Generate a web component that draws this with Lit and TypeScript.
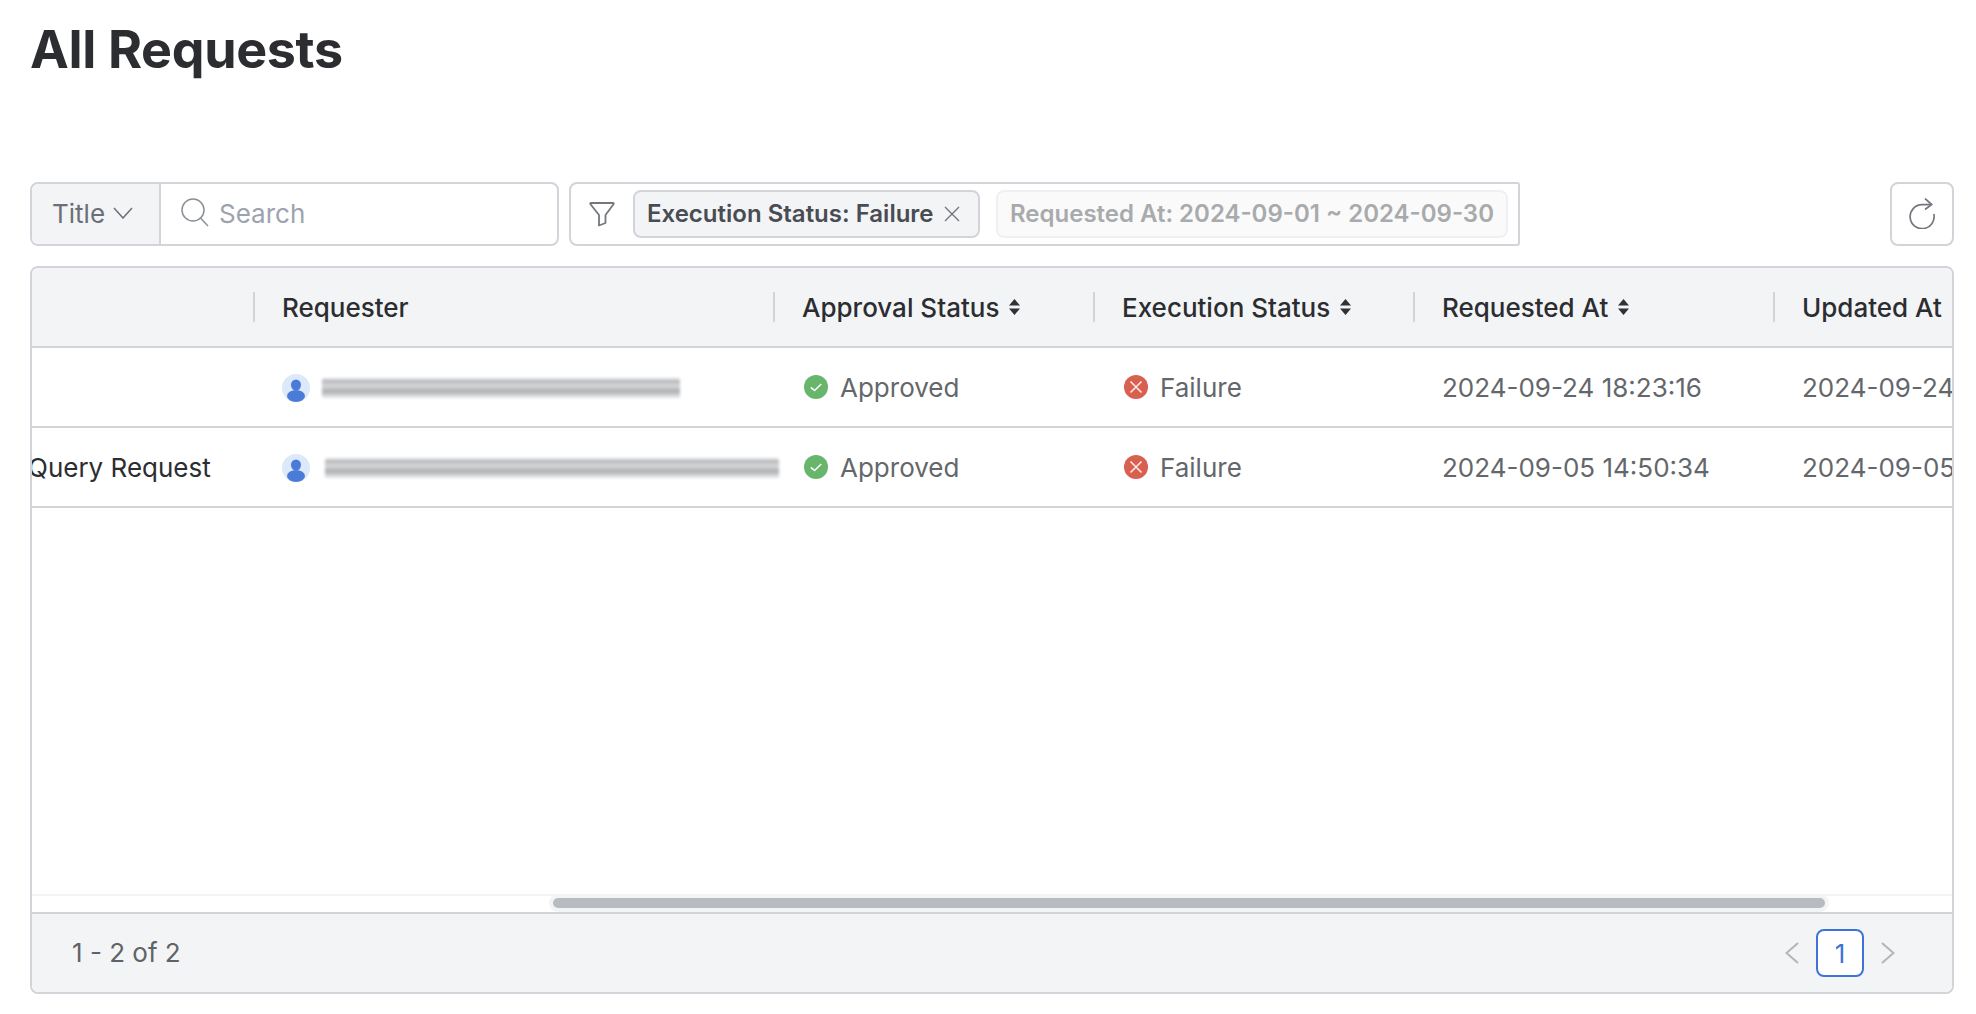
import { LitElement, html, css } from "lit";
import { customElement } from "lit/decorators.js";

const sortIcon = html`<svg class="sort" width="11" height="16" viewBox="0 0 11 16"><path d="M5.5 0 L11 6.5 H0Z M5.5 16 L11 9.5 H0Z" fill="#2f3237"/></svg>`;
const okIcon = html`<svg class="st" width="24" height="24" viewBox="0 0 24 24"><circle cx="12" cy="12" r="12" fill="#68b56c"/><path d="M6.8 12.4 L10.6 15.6 L17.2 9" fill="none" stroke="#fff" stroke-width="1.5"/></svg>`;
const failIcon = html`<svg class="st" width="24" height="24" viewBox="0 0 24 24"><circle cx="12" cy="12" r="12" fill="#d95f50"/><path d="M6.5 6.5 L17.5 17.5 M17.5 6.5 L6.5 17.5" fill="none" stroke="#fbe6e3" stroke-width="1.7"/></svg>`;
const avatar = html`<svg class="av" width="28" height="28" viewBox="0 0 28 28"><circle cx="14" cy="14" r="14" fill="#dce9fb"/><ellipse cx="14" cy="11" rx="5" ry="5.6" fill="#4b7bd8"/><ellipse cx="14" cy="22" rx="9" ry="6" fill="#4b7bd8"/></svg>`;

const rows = [
  { title: "", w: 358, ml: 0, req: "2024-09-24 18:23:16", upd: "2024-09-24 18:23:16" },
  { title: "Query Request", w: 454, ml: 3, req: "2024-09-05 14:50:34", upd: "2024-09-05 14:50:34" },
];

@customElement("app-root")
export class AppRoot extends LitElement {
  static styles = css`
    :host { display: block; font-family: Inter, "Liberation Sans", sans-serif; color: #2b2d31; background: #fff; height: 1014px; overflow: hidden; }
    .page { padding: 18px 22px 0 30px; display: flex; flex-direction: column; }
    h1 { margin: 0; font-size: 52px; line-height: 64px; font-weight: 700; letter-spacing: -0.35px; color: #2b2d31; }
    .toolbar { display: flex; margin-top: 100px; height: 64px; gap: 10px; }
    .search { display: flex; width: 529px; box-sizing: border-box; border: 2px solid #d2d4d9; border-radius: 8px; overflow: hidden; }
    .sel { width: 129px; box-sizing: border-box; background: #f3f4f6; border-right: 2px solid #d2d4d9; display: flex; align-items: center; padding: 0 0 2px 20px; gap: 8px; font-size: 26px; color: #6b7076; }
    .inp { flex: 1; display: flex; align-items: center; padding: 0 0 2px 19px; gap: 9px; font-size: 26px; color: #9ca3af; }
    .filters { width: 951px; box-sizing: border-box; border: 2px solid #d2d4d9; border-radius: 8px 3px 3px 8px; display: flex; align-items: center; padding: 0 0 1px 18px; gap: 18px; }
    .chip { height: 48px; box-sizing: border-box; border-radius: 8px; display: flex; align-items: center; font-size: 24px; font-weight: 600; white-space: nowrap; flex: none; }
    .chip.a { width: 347px; padding-left: 12px; gap: 10px; background: #f3f4f6; border: 2px solid #d2d4d9; color: #494c52; }
    .chip.b { width: 512px; margin-left: -2px; padding-left: 12px; background: #fafafa; border: 2px solid #f0f0f2; color: #a8aaad; }
    .refresh { margin-left: auto; width: 64px; box-sizing: border-box; border: 2px solid #d2d4d9; border-radius: 8px; display: flex; align-items: center; justify-content: center; padding-bottom: 2px; }
    .table { margin-top: 20px; height: 728px; box-sizing: border-box; border: 2px solid #d2d4d9; border-radius: 8px; display: flex; flex-direction: column; overflow: hidden; }
    .scroll { flex: 1; overflow: hidden; min-height: 0; position: relative; }
    .grid { margin-left: -100px; width: 2200px; }
    .row { display: grid; grid-template-columns: 321px 520px 320px 320px 360px 358px; height: 80px; box-sizing: border-box; border-bottom: 2px solid #d2d4d9; align-items: center; font-size: 26px; color: #63676c; }
    .row.head { background: #f3f4f6; font-weight: 500; color: #2b2d31; }
    .cell { display: flex; align-items: center; height: 30px; padding-left: 29px; box-sizing: border-box; white-space: nowrap; gap: 10px; }
    .cell.status { padding-left: 31px; gap: 8px; }
    .head .cell { border-left: 2px solid #d2d4d9; padding-left: 27px; }
    .head .cell:first-child { border-left: none; }
    .cell.title { padding-left: 96px; color: #2b2d31; }
    .st { margin-right: 4px; flex: none; }
    .av { flex: none; margin: 1px 2px 0 0; }
    .blur { height: 20px; margin-top: 2px; border-radius: 2px; background: linear-gradient(180deg, #e4e5e7 0, #b4b6b9 18%, #d8d9db 36%, #c4c6c8 52%, #a9abaf 66%, #cfd1d3 84%, #e8e9ea 100%); filter: blur(1.5px); flex: none; }
    .bar { position: absolute; left: 0; right: 0; bottom: 0; height: 18px; border-top: 2px solid #f3f4f6; box-sizing: border-box; background: #fff; }
    .thumb { position: absolute; left: 517px; width: 1280px; top: -2px; height: 18px; box-sizing: border-box; background: #b8bcc0; border: 4px solid #f3f4f6; border-radius: 9px; }
    .foot { height: 80px; flex: none; box-sizing: border-box; background: #f3f4f6; border-top: 2px solid #d2d4d9; display: flex; align-items: center; padding: 0 0 2px 40px; font-size: 26px; color: #5f6368; }
    .pager { margin-left: auto; display: flex; align-items: center; gap: 17px; padding: 2px 57px 0 0; }
    .page-no { width: 48px; height: 48px; box-sizing: border-box; background: #fff; border: 2px solid #3e73d8; border-radius: 8px; color: #3e73d8; display: flex; align-items: center; justify-content: center; font-size: 26px; }
  `;

  private head(t: string, sort: boolean) {
    return html`<div class="cell">${t}${sort ? sortIcon : ""}</div>`;
  }

  render() {
    return html`<div class="page">
      <h1>All Requests</h1>
      <div class="toolbar">
        <div class="search">
          <div class="sel">Title
            <svg width="20" height="12" viewBox="0 0 20 12"><path d="M1 1 L10 11 L19 1" fill="none" stroke="#6b7076" stroke-width="1.5"/></svg>
          </div>
          <div class="inp">
            <svg width="30" height="30" viewBox="0 0 30 30"><circle cx="13" cy="12" r="11" fill="none" stroke="#8b9097" stroke-width="1.5"/><path d="M20.5 20 L28 28" stroke="#8b9097" stroke-width="1.5"/></svg>
            Search
          </div>
        </div>
        <div class="filters">
          <svg width="26" height="26" viewBox="0 0 26 26"><path d="M2 2 H24 Q25.2 2 24.5 3.2 L16.5 14 V22 L10 24.5 V14 L1.5 3.2 Q0.8 2 2 2Z" fill="none" stroke="#74787e" stroke-width="1.8" stroke-linejoin="round"/></svg>
          <div class="chip a">Execution Status: Failure
            <svg width="16" height="16" viewBox="0 0 16 16"><path d="M1 1 L15 15 M15 1 L1 15" stroke="#74787e" stroke-width="1.4"/></svg>
          </div>
          <div class="chip b">Requested At: 2024-09-01 ~ 2024-09-30</div>
        </div>
        <div class="refresh">
          <svg width="26" height="31" viewBox="0 0 26 31"><path d="M24.8 16 A12 12 0 1 1 13 6.7 H22" fill="none" stroke="#74787e" stroke-width="1.7"/><path d="M16 0.5 L22.7 6.5 L16 11.5" fill="none" stroke="#74787e" stroke-width="1.7"/></svg>
        </div>
      </div>
      <div class="table">
        <div class="scroll">
          <div class="grid">
            <div class="row head">
              ${this.head("", false)}${this.head("Requester", false)}${this.head("Approval Status", true)}${this.head("Execution Status", true)}${this.head("Requested At", true)}${this.head("Updated At", false)}
            </div>
            ${rows.map((r) => html`<div class="row">
              <div class="cell title">${r.title}</div>
              <div class="cell">${avatar}<div class="blur" style="width:${r.w}px;margin-left:${r.ml}px"></div></div>
              <div class="cell status">${okIcon}Approved</div>
              <div class="cell status">${failIcon}Failure</div>
              <div class="cell">${r.req}</div>
              <div class="cell">${r.upd}</div>
            </div>`)}
          </div>
          <div class="bar"><div class="thumb"></div></div>
        </div>
        <div class="foot">1 - 2 of 2
          <div class="pager">
            <svg width="14" height="22" viewBox="0 0 14 22"><path d="M13 1 L1.5 11 L13 21" fill="none" stroke="#b3b5b8" stroke-width="2"/></svg>
            <div class="page-no">1</div>
            <svg width="14" height="22" viewBox="0 0 14 22"><path d="M1 1 L12.5 11 L1 21" fill="none" stroke="#b3b5b8" stroke-width="2"/></svg>
          </div>
        </div>
      </div>
    </div>`;
  }
}
